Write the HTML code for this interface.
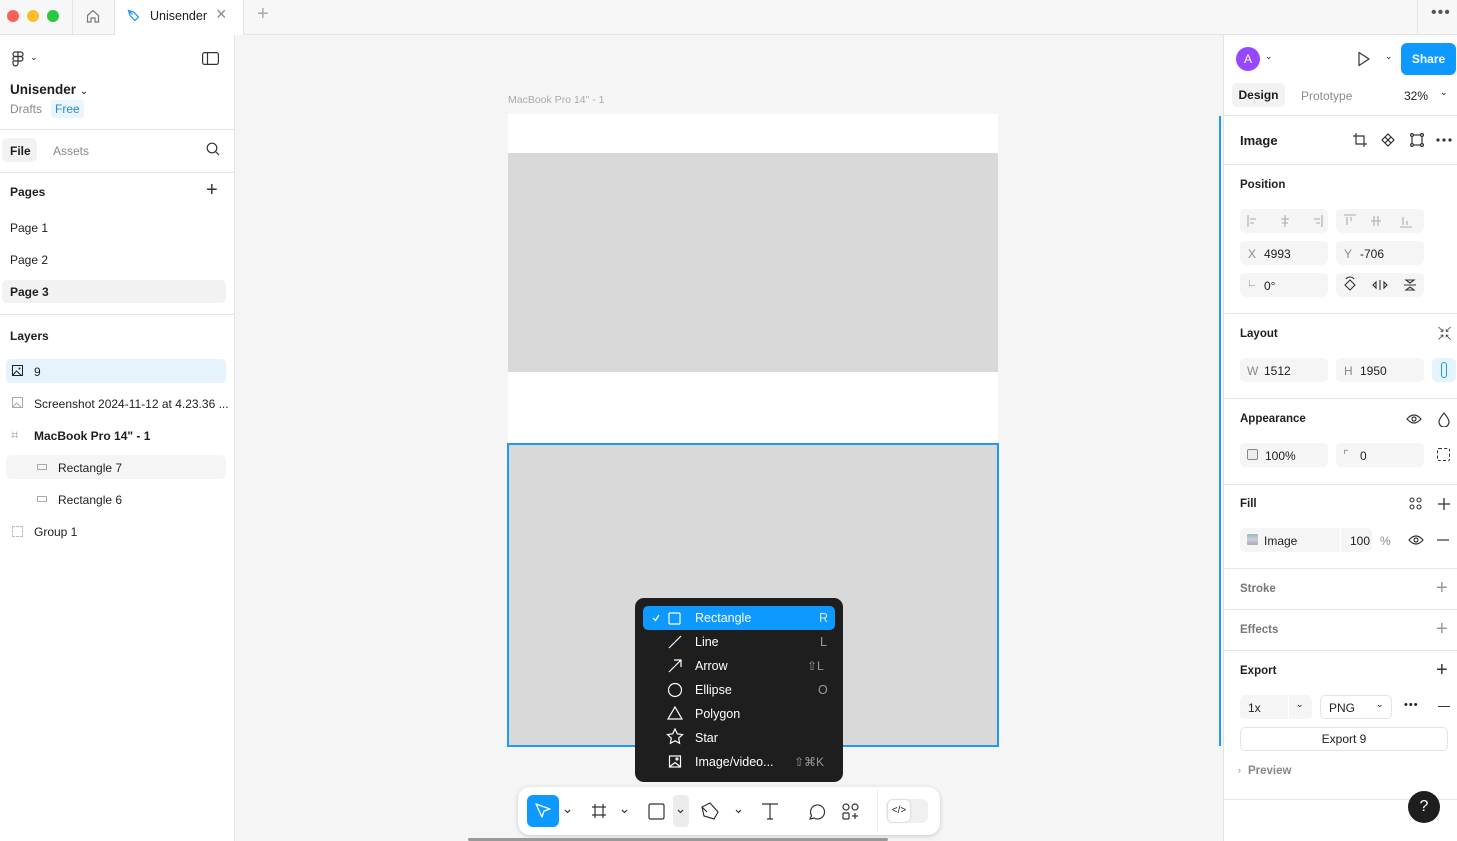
<!DOCTYPE html>
<html><head><meta charset="utf-8"><style>
*{box-sizing:border-box;margin:0;padding:0}
body{width:1457px;height:841px;overflow:hidden;font-family:"Liberation Sans",sans-serif;font-size:12px;color:#1e1e1e;background:#f5f5f5;position:relative}
.a{position:absolute}
.t{font-size:12px}
.b{font-weight:bold}
.g{color:#8a8a8a}
.f{background:#f5f5f5;border-radius:5px;height:24px}
svg{display:block}
.hl{height:1px;background:#e6e6e6}
</style></head><body>
<!-- top bar -->
<div class="a" style="left:0;top:0;width:1457px;height:35px;background:#f7f7f7;border-bottom:1px solid #e3e3e3"></div>
<div class="a" style="left:7px;top:10px;width:12px;height:12px;border-radius:50%;background:#fe5f57"></div>
<div class="a" style="left:27px;top:10px;width:12px;height:12px;border-radius:50%;background:#febc2e"></div>
<div class="a" style="left:47px;top:10px;width:12px;height:12px;border-radius:50%;background:#28c840"></div>
<div class="a" style="left:72px;top:0;width:1px;height:34px;background:#e3e3e3"></div>
<svg class="a" style="left:85px;top:8px" width="16" height="16" viewBox="0 0 16 16"><path d="M2.5 7.5L8 2.5l5.5 5V14h-3.5v-4h-4v4H2.5z" fill="none" stroke="#777" stroke-width="1.2"/></svg>
<div class="a" style="left:114px;top:0;width:130px;height:35px;background:#fff;border-left:1px solid #e3e3e3;border-right:1px solid #e3e3e3"></div>
<svg class="a" style="left:127px;top:9px" width="14" height="14" viewBox="0 0 14 14"><path d="M1.5 1.5l5 1.5 5 5-3.5 3.5-5-5z M1.5 1.5l4 4" fill="none" stroke="#2c9cf0" stroke-width="1.3"/></svg>
<div class="a t" style="left:150px;top:9px;font-size:12.5px">Unisender</div>
<div class="a" style="left:216px;top:4px;font-size:18px;color:#888">×</div>
<div class="a" style="left:257px;top:3px;font-size:20px;color:#aaa">+</div>
<div class="a" style="left:1417px;top:0;width:1px;height:34px;background:#e3e3e3"></div>
<div class="a" style="left:1431px;top:4px;font-size:16px;color:#555;letter-spacing:1px">•••</div>

<!-- left panel -->
<div class="a" style="left:0;top:35px;width:235px;height:806px;background:#fff;border-right:1px solid #e3e3e3"></div>
<svg class="a" style="left:12px;top:51px" width="12" height="16" viewBox="0 0 12 16"><g fill="none" stroke="#333" stroke-width="1.2"><rect x="1" y="1" width="10" height="4.5" rx="2.2"/><rect x="1" y="5.5" width="10" height="4.5" rx="2.2"/><path d="M6 10v3a2.5 2.5 0 1 1-5 -1.5V10"/><path d="M6 1v9"/></g></svg>
<div class="a" style="left:30px;top:52px;font-size:9px">⌄</div>
<svg class="a" style="left:202px;top:52px" width="17" height="13" viewBox="0 0 17 13"><rect x="0.6" y="0.6" width="15.8" height="11.8" rx="2" fill="none" stroke="#333" stroke-width="1.2"/><path d="M5.5 1v11" stroke="#333" stroke-width="1.2"/></svg>
<div class="a b" style="left:10px;top:82px;font-size:13.5px">Unisender <span style="font-size:10px;font-weight:normal">⌄</span></div>
<div class="a g" style="left:10px;top:102px">Drafts</div>
<div class="a" style="left:51px;top:100px;padding:2px 4px;background:#eaf5fe;color:#1d8ee0;border-radius:3px">Free</div>
<div class="a hl" style="left:0;top:129px;width:234px"></div>
<div class="a b" style="left:2px;top:138px;width:35px;height:24px;background:#f2f2f2;border-radius:5px;padding:6px 0 0 8px">File</div>
<div class="a g" style="left:53px;top:144px">Assets</div>
<svg class="a" style="left:206px;top:142px" width="14" height="14" viewBox="0 0 14 14"><circle cx="6" cy="6" r="4.8" fill="none" stroke="#333" stroke-width="1.2"/><path d="M9.5 9.5L13 13" stroke="#333" stroke-width="1.2"/></svg>
<div class="a hl" style="left:0;top:172px;width:234px"></div>
<div class="a b" style="left:10px;top:185px">Pages</div>
<div class="a" style="left:206px;top:180px;font-size:20px;color:#333;line-height:20px">+</div>
<div class="a" style="left:10px;top:221px">Page 1</div>
<div class="a" style="left:10px;top:253px">Page 2</div>
<div class="a" style="left:2px;top:280px;width:224px;height:23px;background:#f2f2f2;border-radius:5px"></div>
<div class="a b" style="left:10px;top:285px">Page 3</div>
<div class="a hl" style="left:0;top:314px;width:234px"></div>
<div class="a b" style="left:10px;top:329px">Layers</div>
<div class="a" style="left:6px;top:359px;width:220px;height:24px;background:#e5f3fe;border-radius:5px"></div>
<svg class="a" style="left:12px;top:365px" width="11" height="11" viewBox="0 0 11 11"><rect x="0.5" y="0.5" width="10" height="10" fill="none" stroke="#222"/><path d="M1 10l3.5-4 5 4.5" fill="none" stroke="#222"/><circle cx="7.5" cy="3.5" r="1" fill="#222"/></svg>
<div class="a" style="left:34px;top:365px">9</div>
<svg class="a" style="left:12px;top:397px" width="11" height="11" viewBox="0 0 11 11"><rect x="0.5" y="0.5" width="10" height="10" fill="none" stroke="#aaa"/><path d="M1 10l3.5-4 5 4.5" fill="none" stroke="#aaa"/></svg>
<div class="a" style="left:34px;top:397px">Screenshot 2024-11-12 at 4.23.36 ...</div>
<div class="a" style="left:11px;top:427px;color:#999;font-size:13px">⌗</div>
<div class="a b" style="left:34px;top:429px">MacBook Pro 14" - 1</div>
<div class="a" style="left:6px;top:455px;width:220px;height:24px;background:#f5f5f5;border-radius:5px"></div>
<div class="a" style="left:37px;top:464px;width:10px;height:6px;border:1px solid #aaa"></div>
<div class="a" style="left:58px;top:461px">Rectangle 7</div>
<div class="a" style="left:37px;top:496px;width:10px;height:6px;border:1px solid #aaa"></div>
<div class="a" style="left:58px;top:493px">Rectangle 6</div>
<div class="a" style="left:12px;top:526px;width:11px;height:11px;border:1px dashed #bbb"></div>
<div class="a" style="left:34px;top:525px">Group 1</div>

<!-- canvas -->
<div class="a" style="left:508px;top:94px;font-size:10.5px;color:#aaa">MacBook Pro 14" - 1</div>
<div class="a" style="left:508px;top:114px;width:490px;height:631px;background:#fff"></div>
<div class="a" style="left:508px;top:153px;width:490px;height:219px;background:#d9d9d9"></div>
<div class="a" style="left:507px;top:443px;width:492px;height:304px;background:#d9d9d9;border:2px solid #1c9bf0"></div>
<div class="a" style="left:1219px;top:116px;width:2px;height:630px;background:#1c9bf0"></div>

<!-- dropdown -->
<div class="a" style="left:635px;top:598px;width:208px;height:184px;background:#1e1e1e;border-radius:9px;color:#fff;font-size:12.5px"></div>
<div class="a" style="left:643px;top:606px;width:192px;height:24px;background:#0d99ff;border-radius:5px"></div>
<svg class="a" style="left:650px;top:610px;overflow:visible" width="180" height="160" viewBox="0 0 180 160" fill="none" stroke="#fff" stroke-width="1.2">
<path d="M3 8l2.5 2.5L9 5"/>
<rect x="19" y="3" width="11" height="11" rx="1"/>
<path d="M19 38l12-12"/>
<path d="M19 62l12-12M24 50h7v7"/>
<circle cx="25" cy="80" r="6.5"/>
<path d="M25 97l7 12H18z"/>
<path d="M25 119l2.3 4.8 5.2.7-3.8 3.6.9 5.2-4.6-2.5-4.6 2.5.9-5.2-3.8-3.6 5.2-.7z"/>
<rect x="19.5" y="146" width="11" height="11"/><path d="M20 156.5l5-4 5 4"/><circle cx="27" cy="149" r="1"/>
</svg>
<div class="a" style="left:695px;top:611px;color:#fff;font-size:12.5px;line-height:14px">Rectangle</div>
<div class="a" style="left:819px;top:611px;color:#d5ebff;font-size:12.5px">R</div>
<div class="a" style="left:695px;top:635px;color:#fff;font-size:12.5px">Line</div>
<div class="a" style="left:820px;top:635px;color:#999;font-size:12.5px">L</div>
<div class="a" style="left:695px;top:659px;color:#fff;font-size:12.5px">Arrow</div>
<div class="a" style="left:807px;top:659px;color:#999;font-size:12px">⇧L</div>
<div class="a" style="left:695px;top:683px;color:#fff;font-size:12.5px">Ellipse</div>
<div class="a" style="left:818px;top:683px;color:#999;font-size:12.5px">O</div>
<div class="a" style="left:695px;top:707px;color:#fff;font-size:12.5px">Polygon</div>
<div class="a" style="left:695px;top:731px;color:#fff;font-size:12.5px">Star</div>
<div class="a" style="left:695px;top:755px;color:#fff;font-size:12.5px">Image/video...</div>
<div class="a" style="left:794px;top:755px;color:#999;font-size:12px">⇧⌘K</div>

<!-- toolbar -->
<div class="a" style="left:518px;top:787px;width:422px;height:48px;background:#fff;border-radius:12px;box-shadow:0 1px 5px rgba(0,0,0,.18)"></div>
<div class="a" style="left:527px;top:795px;width:32px;height:32px;background:#0d99ff;border-radius:6px"></div>
<svg class="a" style="left:533px;top:801px" width="20" height="20" viewBox="0 0 20 20"><path d="M3 3l14 5-6 2-2 6z" fill="none" stroke="#fff" stroke-width="1.3" stroke-linejoin="round"/></svg>
<div class="a" style="left:673px;top:795px;width:16px;height:32px;background:#ececec;border-radius:4px"></div>
<svg class="a" style="left:560px;top:795px" width="380" height="32" viewBox="0 0 380 32" fill="none" stroke="#333" stroke-width="1.2">
<path d="M5 15l2.5 2.5L10 15M62 15l2.5 2.5L67 15M118 15l2.5 2.5L123 15M176 15l2.5 2.5L181 15"/>
<path d="M35 9v14M43 9v14M32 12h14M32 20h14"/>
<rect x="89" y="9" width="15" height="15" rx="1.5"/>
<path d="M142 12l8-4 8 9-4 7-10-3z M142 12l5 5"/>
<path d="M202 9h16M210 9v15M207 24h6"/>
<path d="M250 24l1.5-3.5A7 7 0 1 1 254 23z"/>
<circle cx="286" cy="12" r="3"/><circle cx="295" cy="12" r="3"/><rect x="283" y="18" width="6" height="6" rx="1"/><path d="M295 18v6M292 21h6"/>
</svg>
<div class="a" style="left:877px;top:790px;width:1px;height:42px;background:#eee"></div>
<div class="a" style="left:886px;top:799px;width:42px;height:24px;background:#f0f0f0;border-radius:6px"></div>
<div class="a" style="left:888px;top:800px;width:22px;height:22px;background:#fff;border-radius:5px;font-size:10px;text-align:center;line-height:22px;box-shadow:0 0 2px rgba(0,0,0,.2)">&lt;/&gt;</div>
<div class="a" style="left:468px;top:838px;width:420px;height:3px;background:#999;border-radius:2px"></div>

<!-- right panel -->
<div class="a" style="left:1223px;top:35px;width:234px;height:806px;background:#fff;border-left:1px solid #e3e3e3"></div>
<div class="a" style="left:1236px;top:47px;width:24px;height:24px;border-radius:50%;background:#9747ff;color:#fff;text-align:center;line-height:24px;font-size:12px">A</div>
<div class="a" style="left:1265px;top:51px;font-size:9px">⌄</div>
<svg class="a" style="left:1357px;top:51px" width="14" height="16" viewBox="0 0 14 16"><path d="M2 1.5l10 6.5-10 6.5z" fill="none" stroke="#333" stroke-width="1.2" stroke-linejoin="round"/></svg>
<div class="a" style="left:1385px;top:51px;font-size:9px">⌄</div>
<div class="a b" style="left:1401px;top:43px;width:55px;height:32px;background:#0d99ff;border-radius:6px;color:#fff;text-align:center;line-height:32px">Share</div>
<div class="a b" style="left:1232px;top:83px;width:53px;height:24px;background:#f2f2f2;border-radius:5px;text-align:center;line-height:24px">Design</div>
<div class="a g" style="left:1301px;top:89px">Prototype</div>
<div class="a" style="left:1404px;top:89px">32%</div>
<div class="a" style="left:1440px;top:87px;font-size:9px">⌄</div>
<div class="a hl" style="left:1224px;top:115px;width:233px"></div>
<div class="a b" style="left:1240px;top:133px;font-size:13px">Image</div>
<svg class="a" style="left:1352px;top:132px" width="100" height="16" viewBox="0 0 100 16" fill="none" stroke="#333" stroke-width="1.2">
<path d="M4 1v11h11M1 4h11v11"/>
<path d="M36 2l3 3-3 3-3-3zM36 8l3 3-3 3-3-3zM33 5l3 3-3 3-3-3zM39 5l3 3-3 3-3-3z"/>
<rect x="60" y="3" width="10" height="10"/><circle cx="60" cy="3" r="1.4" fill="#fff"/><circle cx="70" cy="3" r="1.4" fill="#fff"/><circle cx="60" cy="13" r="1.4" fill="#fff"/><circle cx="70" cy="13" r="1.4" fill="#fff"/>
<circle cx="86" cy="8" r="1" fill="#333"/><circle cx="92" cy="8" r="1" fill="#333"/><circle cx="98" cy="8" r="1" fill="#333"/>
</svg>
<div class="a hl" style="left:1224px;top:164px;width:233px"></div>
<div class="a b" style="left:1240px;top:179px;font-size:11.5px">Position</div>
<div class="a f" style="left:1240px;top:209px;width:88px"></div>
<div class="a f" style="left:1336px;top:209px;width:88px"></div>
<svg class="a" style="left:1240px;top:209px" width="184" height="24" viewBox="0 0 184 24" fill="none" stroke="#aaa" stroke-width="1.1">
<path d="M8 6v12M10 10h6M10 14h4M45 6v12M41 10h8M42 14h6M82 6v12M74 10h6M76 14h4"/>
<path d="M104 6h12M107 8v8M111 8v4M134 7v10M138 7v10M131 12h10M160 18h12M163 8v8M167 12v4"/>
</svg>
<div class="a f" style="left:1240px;top:241px;width:88px"></div>
<div class="a g" style="left:1248px;top:247px">X</div><div class="a" style="left:1264px;top:247px">4993</div>
<div class="a f" style="left:1336px;top:241px;width:88px"></div>
<div class="a g" style="left:1344px;top:247px">Y</div><div class="a" style="left:1360px;top:247px">-706</div>
<div class="a f" style="left:1240px;top:273px;width:88px"></div>
<div class="a g" style="left:1247px;top:278px;font-size:10px">∟</div><div class="a" style="left:1264px;top:279px">0°</div>
<div class="a f" style="left:1336px;top:273px;width:88px"></div>
<svg class="a" style="left:1336px;top:273px" width="88" height="24" viewBox="0 0 88 24" fill="none" stroke="#333" stroke-width="1.1">
<path d="M14 7l5 5-5 5-5-5z M10 6a5 5 0 0 1 8 0"/>
<path d="M44 7v10M40 9v6l-3-3zM48 9v6l3-3z"/>
<path d="M68 12h12M70 7h8l-4 3zM70 17h8l-4-3z"/>
</svg>
<div class="a hl" style="left:1224px;top:313px;width:233px"></div>
<div class="a b" style="left:1240px;top:328px;font-size:11.5px">Layout</div>
<div class="a" style="left:1437px;top:325px;font-size:9px;line-height:8px;color:#333">↘↙<br>↗↖</div>
<div class="a f" style="left:1240px;top:358px;width:88px"></div>
<div class="a g" style="left:1247px;top:364px">W</div><div class="a" style="left:1264px;top:364px">1512</div>
<div class="a f" style="left:1336px;top:358px;width:88px"></div>
<div class="a g" style="left:1344px;top:364px">H</div><div class="a" style="left:1360px;top:364px">1950</div>
<div class="a" style="left:1432px;top:358px;width:24px;height:24px;background:#e5f3fe;border-radius:5px"></div>
<div class="a" style="left:1441px;top:362px;width:6px;height:16px;border:1.2px solid #1c9bf0;border-radius:3px"></div>
<div class="a hl" style="left:1224px;top:398px;width:233px"></div>
<div class="a b" style="left:1240px;top:413px;font-size:11.5px">Appearance</div>
<svg class="a" style="left:1406px;top:411px" width="44" height="16" viewBox="0 0 44 16" fill="none" stroke="#333" stroke-width="1.2"><path d="M1 8q7-8 14 0q-7 8-14 0z"/><circle cx="8" cy="8" r="2"/><path d="M38 2q-5 6-5 9a5 5 0 0 0 10 0q0-3-5-9z"/></svg>
<div class="a f" style="left:1240px;top:443px;width:88px"></div>
<div class="a" style="left:1247px;top:449px;width:11px;height:11px;border:1px solid #888;border-radius:2px;background:#eee"></div>
<div class="a" style="left:1265px;top:449px">100%</div>
<div class="a f" style="left:1336px;top:443px;width:88px"></div>
<div class="a g" style="left:1343px;top:448px">⌜</div><div class="a" style="left:1360px;top:449px">0</div>
<div class="a" style="left:1437px;top:448px;width:13px;height:13px;border:1.2px dashed #333;border-radius:2px"></div>
<div class="a hl" style="left:1224px;top:484px;width:233px"></div>
<div class="a b" style="left:1240px;top:498px;font-size:11.5px">Fill</div>
<svg class="a" style="left:1409px;top:497px" width="44" height="14" viewBox="0 0 44 14" fill="none" stroke="#333" stroke-width="1.1"><circle cx="3" cy="3" r="2"/><circle cx="10" cy="3" r="2"/><circle cx="3" cy="10" r="2"/><circle cx="10" cy="10" r="2"/><path d="M35 1v12M29 7h12" stroke-width="1.3"/></svg>
<div class="a f" style="left:1240px;top:528px;width:132px;background:#f5f5f5"></div>
<div class="a" style="left:1340px;top:528px;width:1px;height:24px;background:#fff"></div>
<div class="a" style="left:1247px;top:534px;width:11px;height:11px;background:linear-gradient(#9bb 0,#ccd 50%,#aab 100%);border-radius:1px"></div>
<div class="a" style="left:1264px;top:534px">Image</div>
<div class="a" style="left:1350px;top:534px">100</div><div class="a g" style="left:1380px;top:534px">%</div>
<svg class="a" style="left:1408px;top:533px" width="44" height="14" viewBox="0 0 44 14" fill="none" stroke="#333" stroke-width="1.2"><path d="M1 7q7-8 14 0q-7 8-14 0z"/><circle cx="8" cy="7" r="2"/><path d="M29 7h12"/></svg>
<div class="a hl" style="left:1224px;top:568px;width:233px"></div>
<div class="a b g" style="left:1240px;top:583px;font-size:11.5px;color:#777">Stroke</div>
<div class="a" style="left:1436px;top:578px;font-size:20px;color:#999;line-height:20px">+</div>
<div class="a hl" style="left:1224px;top:609px;width:233px"></div>
<div class="a b" style="left:1240px;top:624px;font-size:11.5px;color:#777">Effects</div>
<div class="a" style="left:1436px;top:619px;font-size:20px;color:#999;line-height:20px">+</div>
<div class="a hl" style="left:1224px;top:650px;width:233px"></div>
<div class="a b" style="left:1240px;top:665px;font-size:11.5px">Export</div>
<div class="a" style="left:1436px;top:660px;font-size:20px;color:#333;line-height:20px">+</div>
<div class="a f" style="left:1240px;top:695px;width:72px"></div>
<div class="a" style="left:1288px;top:695px;width:1px;height:24px;background:#fff"></div>
<div class="a" style="left:1248px;top:701px">1x</div><div class="a" style="left:1296px;top:699px;font-size:9px">⌄</div>
<div class="a" style="left:1320px;top:695px;width:72px;height:24px;border:1px solid #e3e3e3;border-radius:5px"></div>
<div class="a" style="left:1329px;top:701px">PNG</div><div class="a" style="left:1376px;top:699px;font-size:9px">⌄</div>
<div class="a" style="left:1404px;top:699px;font-size:11px;letter-spacing:1px">•••</div>
<div class="a" style="left:1438px;top:706px;width:12px;height:1.3px;background:#333"></div>
<div class="a" style="left:1240px;top:727px;width:208px;height:24px;border:1px solid #e3e3e3;border-radius:5px;text-align:center;line-height:22px">Export 9</div>
<div class="a g" style="left:1238px;top:765px;font-size:9px">›</div>
<div class="a b" style="left:1248px;top:765px;font-size:11.5px;color:#888">Preview</div>
<div class="a hl" style="left:1224px;top:799px;width:233px"></div>
<div class="a" style="left:1408px;top:791px;width:32px;height:32px;border-radius:50%;background:#1e1e1e;color:#fff;text-align:center;line-height:32px;font-size:16px">?</div>
</body></html>
